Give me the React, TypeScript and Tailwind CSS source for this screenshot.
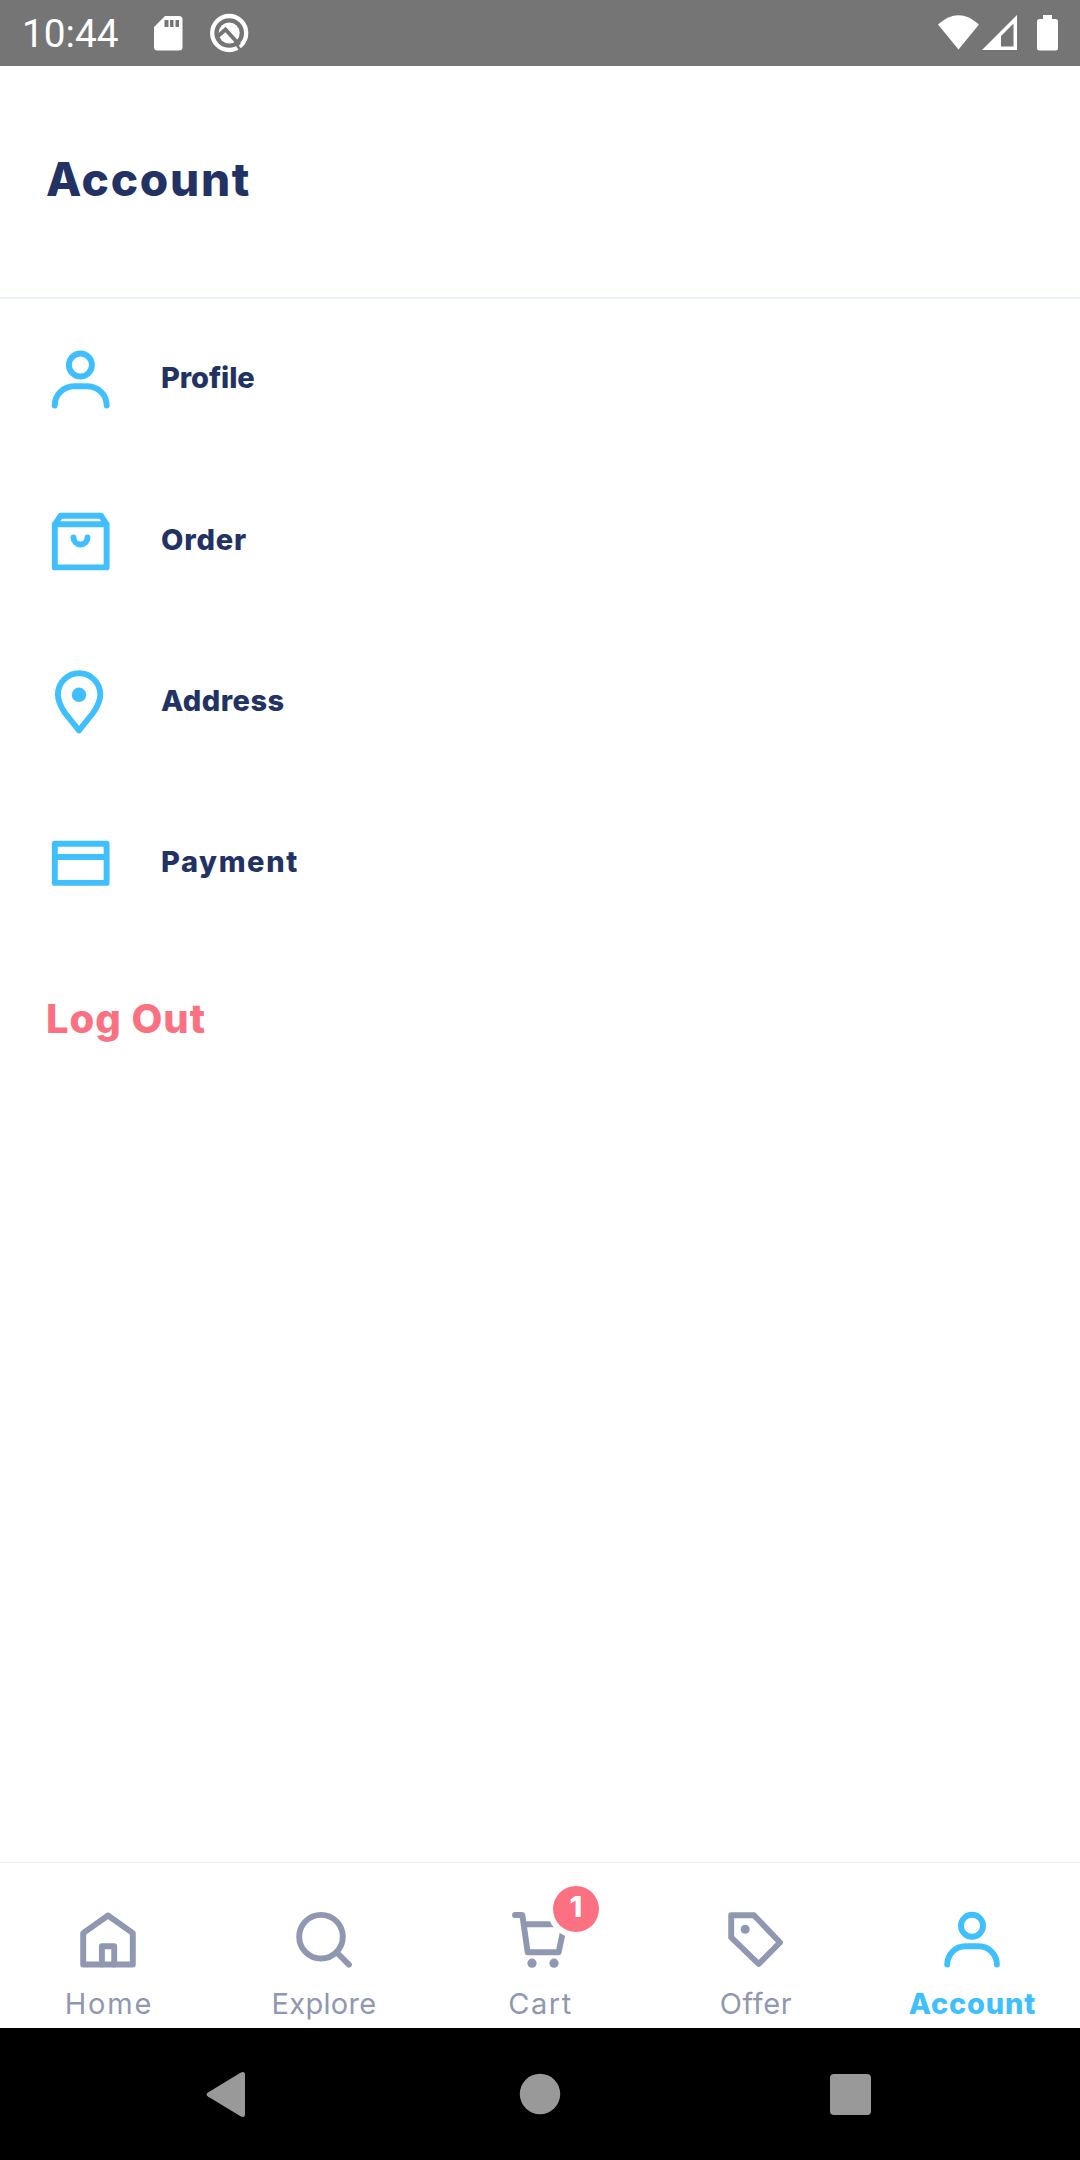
import type { ReactNode } from "react";

type IconProps = { box: string; className: string; children: ReactNode };

function LineIcon({ box, className, children }: IconProps) {
  return (
    <svg
      viewBox={box}
      className={className}
      fill="none"
      stroke="currentColor"
      strokeWidth={5.9}
      strokeLinecap="round"
      strokeLinejoin="round"
    >
      {children}
    </svg>
  );
}

function StatusBar() {
  return (
    <div className="flex h-[66px] shrink-0 items-center bg-[#757575] text-white">
      <span className="ml-[22px] w-[108px] pt-[3px] font-['Roboto'] text-[38.8px] leading-none">10:44</span>
      <svg viewBox="150 0 110 66" className="ml-5 h-[66px] w-[110px]" fill="currentColor">
        <path
          fillRule="evenodd"
          d="M165 16h14a3.500 3.500 0 0 1 3.500 3.500V47a3.500 3.500 0 0 1-3.500 3.500h-21.500a3.500 3.500 0 0 1-3.500-3.500V27zM164.500 20v7h4v-7zm5.500 0v7h3.500v-7zm5.500 0v7h3.500v-7z"
        />
        <circle cx="229.200" cy="33" r="17" fill="none" stroke="currentColor" strokeWidth="4.300" />
        <circle cx="229.200" cy="33" r="10.500" />
        <path d="M217 37L225.500 29.500L239.500 45" fill="none" stroke="#757575" strokeWidth="3.800" />
        <path d="M236.500 44.500L241 51" stroke="#757575" strokeWidth="2.600" />
      </svg>
      <svg viewBox="930 0 150 66" className="ml-auto h-[66px] w-[150px]" fill="currentColor">
        <path d="M938 24.500Q958.500 6 979 24.500L958.500 49.500z" />
        <path fillRule="evenodd" d="M1017 15v35h-35zM1013.500 23.500L1001 36v10.500h12.500z" />
        <path d="M1043 15h9v4h3.500a2.500 2.500 0 0 1 2.500 2.500V48a2.500 2.500 0 0 1-2.500 2.500h-16A2.500 2.500 0 0 1 1037 48V21.500a2.500 2.500 0 0 1 2.500-2.500h3.500z" />
      </svg>
    </div>
  );
}

const menu = [
  {
    label: "Profile",
    box: "47 347 66 66",
    track: "pb-1 tracking-[-0.1px]",
    art: (
      <>
        <circle cx="80.400" cy="365" r="11.500" />
        <path d="M54.700 405.500A19.300 19.300 0 0 1 74 386.200H87.400A19.300 19.300 0 0 1 106.700 405.500" />
      </>
    ),
  },
  {
    label: "Order",
    box: "47 508 66 66",
    track: "pb-0.5 tracking-[0.8px]",
    art: (
      <>
        <path d="M54.800 524.300H106.600V567.400H54.800ZL60.700 515.700H101L106.600 524.300" />
        <path d="M73.500 537.500a7 7 0 0 0 14 0" />
      </>
    ),
  },
  {
    label: "Address",
    box: "47 669.500 66 66",
    track: "pb-1 tracking-[0.45px]",
    art: (
      <>
        <path d="M79 731L65 713.500Q57.900 703 57.900 695a21.200 21.200 0 0 1 42.400 0Q100.300 703 93 713.500Z" />
        <circle cx="79" cy="695.300" r="7.200" fill="currentColor" stroke="none" />
      </>
    ),
  },
  {
    label: "Payment",
    box: "47 831 66 66",
    track: "pb-1 tracking-[1.6px]",
    art: <path d="M54.800 843.800H106.600V882.900H54.800ZM54.800 857H106.600" />,
  },
];

const tabs = [
  {
    label: "Home",
    box: "75 1907 66 66",
    track: "tracking-[1.8px] pl-[2px]",
    art: (
      <>
        <path d="M83.200 1933.200L108 1915.500L132.800 1933.200V1964.500H83.200Z" />
        <path d="M101.900 1964.500V1946.200H114.200V1964.500" />
      </>
    ),
  },
  {
    label: "Explore",
    box: "291 1907 66 66",
    track: "tracking-[0.3px]",
    art: (
      <>
        <circle cx="321" cy="1936.700" r="21.800" />
        <path d="M336.800 1952.500L348.900 1964.600" />
      </>
    ),
  },
  {
    label: "Cart",
    box: "507 1907 66 66",
    track: "tracking-[1.6px] pl-px",
    badge: "1",
    art: (
      <>
        <path d="M515 1915H522.300L527.700 1952.300H558.600L564.500 1924.300H524" />
        <circle cx="532" cy="1963.200" r="4.600" fill="currentColor" stroke="none" />
        <circle cx="554" cy="1963.200" r="4.600" fill="currentColor" stroke="none" />
        <circle cx="576" cy="1909" r="29" fill="white" stroke="none" />
      </>
    ),
  },
  {
    label: "Offer",
    box: "723 1907 66 66",
    track: "tracking-[0.6px]",
    art: (
      <>
        <path d="M731.200 1915.200H754L780 1942.500L758.700 1964L731.200 1937.400Z" />
        <circle cx="745.200" cy="1929.300" r="4.500" fill="currentColor" stroke="none" />
      </>
    ),
  },
  {
    label: "Account",
    box: "939 1907 66 66",
    track: "tracking-[0.8px] pl-px",
    active: true,
    art: (
      <>
        <circle cx="972" cy="1925.800" r="11" />
        <path d="M947.200 1964.600A18.300 18.300 0 0 1 965.500 1946.300H978.600A18.300 18.300 0 0 1 996.900 1964.600" />
      </>
    ),
  },
];

export default function App() {
  return (
    <div className="flex h-[2160px] w-[1080px] flex-col overflow-hidden bg-white font-['Inter',sans-serif]">
      <StatusBar />
      <header className="flex h-[233px] shrink-0 items-center border-b-2 border-[#EBF0FF] px-[46px] pb-1.5">
        <h1 className="text-[46px] font-extrabold leading-none tracking-[1.7px] text-[#223263]">Account</h1>
      </header>
      <main className="flex-1">
        {menu.map((m) => (
          <div key={m.label} className="flex h-[161.3px] items-center pl-[47px]">
            <LineIcon box={m.box} className="h-[66px] w-[66px] text-[#40BFFF]">
              {m.art}
            </LineIcon>
            <span className={`ml-12 text-[29px] font-extrabold leading-none text-[#223263] ${m.track}`}>{m.label}</span>
          </div>
        ))}
        <button className="ml-[46px] mt-[55px] block text-[40px] font-extrabold leading-none tracking-[0.95px] text-[#FB7181]">
          Log Out
        </button>
      </main>
      <nav className="grid h-[166px] shrink-0 grid-cols-5 border-t border-[#EBF0FF]">
        {tabs.map((t) => (
          <div
            key={t.label}
            className={`flex flex-col items-center pt-11 ${t.active ? "font-extrabold text-[#40BFFF]" : "text-[#9098B1]"}`}
          >
            <div className="relative">
              <LineIcon box={t.box} className="h-[66px] w-[66px]">
                {t.art}
              </LineIcon>
              {t.badge && (
                <span className="absolute -top-[21px] left-[46px] flex h-[46px] w-[46px] items-center justify-center rounded-full bg-[#FB7181] pb-[5px] text-[29px] font-extrabold leading-none text-white">
                  {t.badge}
                </span>
              )}
            </div>
            <span className={`mt-4 text-[29px] leading-none ${t.track}`}>{t.label}</span>
          </div>
        ))}
      </nav>
      <div className="h-[132px] shrink-0 bg-black">
        <svg viewBox="0 2028 1080 132" className="h-[132px] w-[1080px]" fill="#999999">
          <path d="M208 2092.500L240.500 2072.800Q245 2070.500 245 2075V2114Q245 2118.500 240.500 2116.200L208 2096.500Q205 2094.500 208 2092.500Z" />
          <circle cx="540" cy="2094" r="20.200" />
          <rect x="830" y="2074" width="41" height="41" rx="4" />
        </svg>
      </div>
    </div>
  );
}
